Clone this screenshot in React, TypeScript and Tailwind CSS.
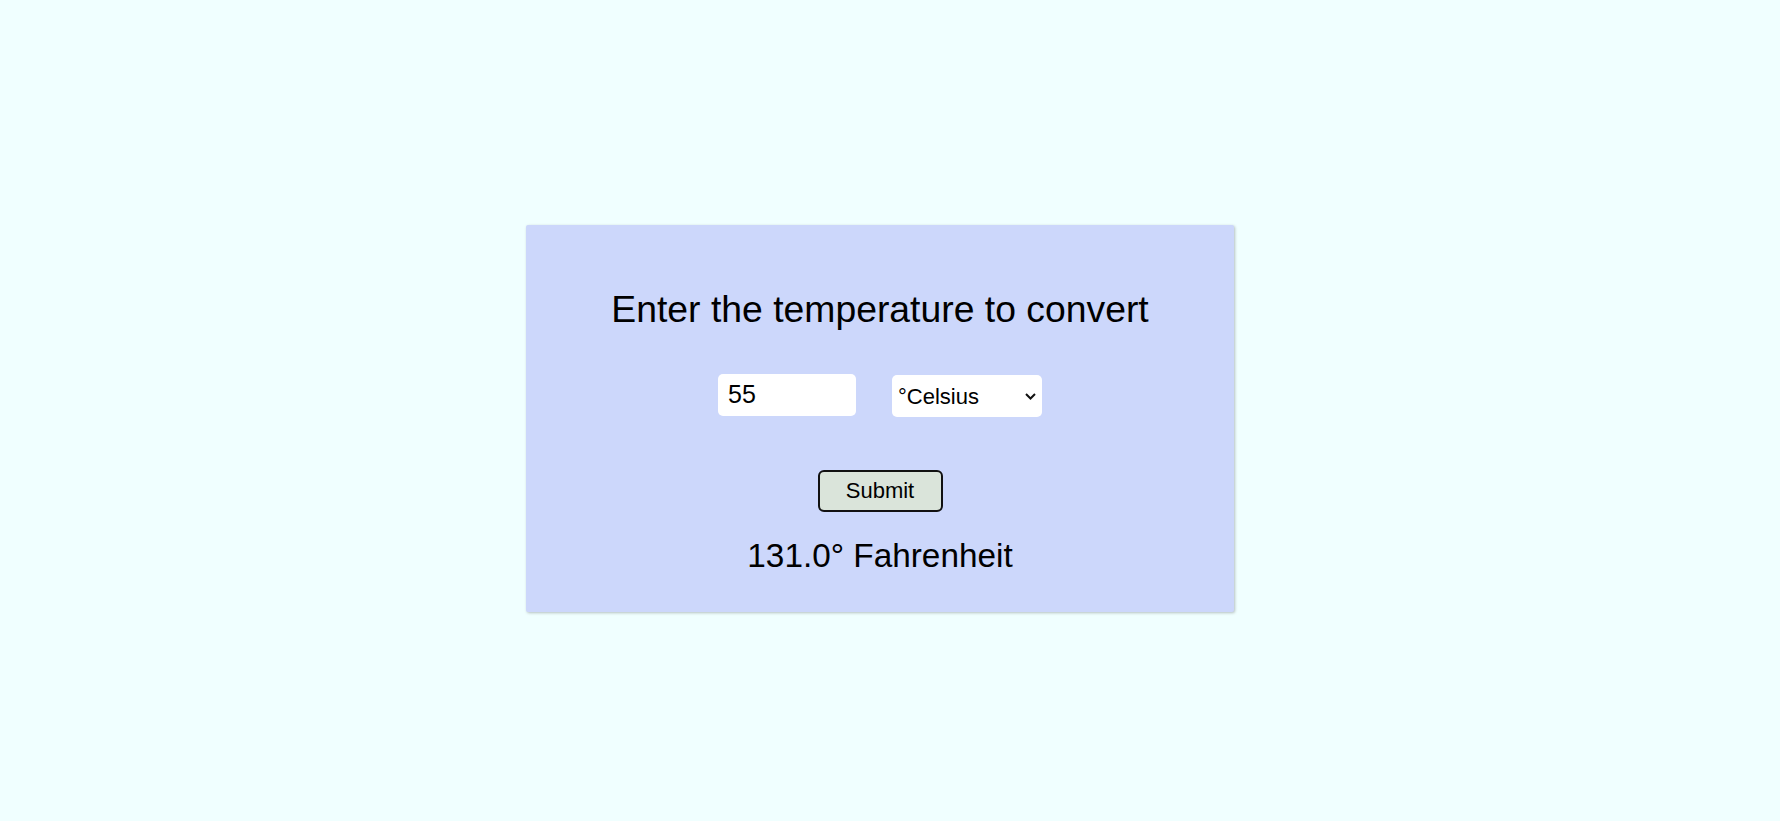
import React, { useState } from "react";

export default function App() {
  const [value, setValue] = useState("55");
  const [unit, setUnit] = useState("celsius");
  return (
    <div
      className="min-h-screen w-full bg-[#f0ffff] pt-[225px] pl-[526px]"
      style={{ fontFamily: '"Liberation Sans", Arial, sans-serif' }}
    >
      <div className="flex w-[708px] flex-col items-center rounded-[2px] bg-[#ccd7fb] pt-[63px] pb-[37px] text-black shadow-[1px_1px_3px_rgba(0,0,0,0.25)]">
        <h1 className="text-[37.33px] leading-[42px] font-normal">Enter the temperature to convert</h1>
        <div className="mt-[44px] flex h-[43px] items-start gap-[36px]">
          <input
            type="text"
            value={value}
            onChange={(e) => setValue(e.target.value)}
            className="h-[42px] w-[138px] rounded-[5px] bg-white pl-[10px] pb-[2px] text-[25px] text-black outline-none"
          />
          <div className="relative mt-[1px] h-[42px] w-[150px]">
            <select
              value={unit}
              onChange={(e) => setUnit(e.target.value)}
              className="h-[42px] w-[150px] appearance-none rounded-[5px] bg-white pl-[6px] text-[22px] text-black outline-none"
            >
              <option value="celsius">°Celsius</option>
              <option value="fahrenheit">°Fahrenheit</option>
            </select>
            <svg
              className="pointer-events-none absolute right-[6px] top-[18px]"
              width="11"
              height="7"
              viewBox="0 0 11 7"
              fill="none"
            >
              <path d="M1 1L5.5 5.5L10 1" stroke="#111" strokeWidth="2" />
            </svg>
          </div>
        </div>
        <button className="mt-[53px] h-[42px] w-[125px] rounded-[6px] border-2 border-[#111] bg-[#dae4da] text-[22px] leading-none text-black">
          Submit
        </button>
        <p className="mt-[25px] text-[33.33px] leading-[38px]">131.0° Fahrenheit</p>
      </div>
    </div>
  );
}
